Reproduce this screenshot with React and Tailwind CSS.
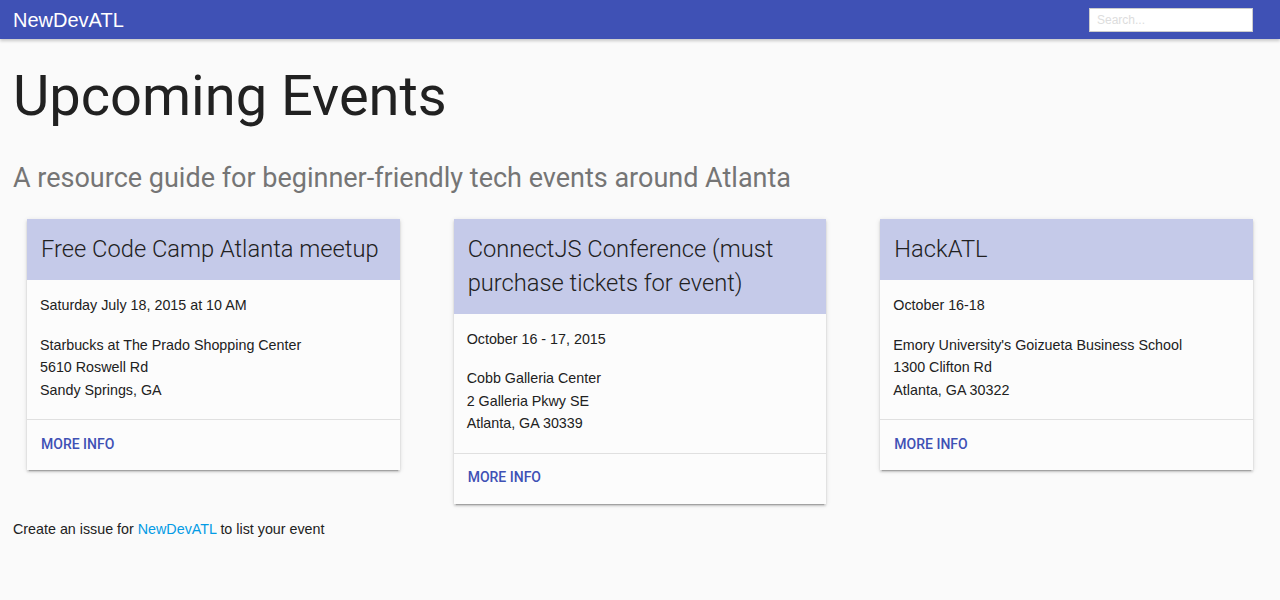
import React from 'react';

const EVENTS = [
  {
    title: 'Free Code Camp Atlanta meetup',
    date: 'Saturday July 18, 2015 at 10 AM',
    address: ['Starbucks at The Prado Shopping Center', '5610 Roswell Rd', 'Sandy Springs, GA'],
  },
  {
    title: 'ConnectJS Conference (must purchase tickets for event)',
    date: 'October 16 - 17, 2015',
    address: ['Cobb Galleria Center', '2 Galleria Pkwy SE', 'Atlanta, GA 30339'],
  },
  {
    title: 'HackATL',
    date: 'October 16-18',
    address: ["Emory University's Goizueta Business School", '1300 Clifton Rd', 'Atlanta, GA 30322'],
  },
];

const sans = "font-['Liberation_Sans',Arial,sans-serif]";
const roboto = "font-['Roboto',sans-serif]";

function EventCard({ event }) {
  return (
    <div className="bg-[#fcfcfc] shadow-[0_2px_2px_0_rgba(0,0,0,0.14),0_3px_1px_-2px_rgba(0,0,0,0.2),0_1px_5px_0_rgba(0,0,0,0.12)]">
      <div className="bg-[#c5cae9] px-[14px] pt-[14px] pb-[13.5px]">
        <h2 className={`${roboto} text-[23.7px] leading-[33.5px] font-light text-[#212121]`}>{event.title}</h2>
      </div>
      <div className={`${sans} px-[13px] pt-[14px] pb-[18px] text-[14.3px] leading-[22.5px] text-[#212121]`}>
        <p className="mb-[17px]">{event.date}</p>
        {event.address.map(line => <p key={line}>{line}</p>)}
      </div>
      <div className="border-t border-[#e0e0e0] h-[51px] flex items-center px-[14px] pb-[2px]">
        <a href="#" className={`${roboto} text-[14px] font-medium uppercase text-[#3f51b5]`}>More info</a>
      </div>
    </div>
  );
}

export default function App() {
  return (
    <div className="min-h-[600px] bg-[#fafafa]">
      <header className="h-[39px] bg-[#3f51b5] flex items-center justify-between pl-[13px] pr-[27px] shadow-[0_2px_3px_rgba(0,0,0,0.2)]">
        <span className={`${sans} text-[20px] text-white`}>NewDevATL</span>
        <input
          placeholder="Search..."
          className={`${sans} w-[164px] h-[24px] bg-white border border-[#ccc] px-[7px] text-[12px] placeholder:text-[#ddd] outline-none`}
        />
      </header>

      <main className="pt-[25px]">
        <h1 className={`${roboto} px-[13px] text-[56px] leading-[64px] font-normal text-[#212121]`}>Upcoming Events</h1>
        <p className={`${roboto} px-[13px] mt-[32px] text-[27px] leading-[36px] text-[#757575]`}>
          A resource guide for beginner-friendly tech events around Atlanta
        </p>

        <div className="grid grid-cols-3 gap-[54px] px-[27px] mt-[23px] items-start">
          {EVENTS.map(e => <EventCard key={e.title} event={e} />)}
        </div>

        <p className={`${sans} px-[13px] mt-[15px] text-[14.3px] leading-[20px] text-[#212121]`}>
          Create an issue for <a href="#" className="text-[#039be5]">NewDevATL</a> to list your event
        </p>
      </main>
    </div>
  );
}
